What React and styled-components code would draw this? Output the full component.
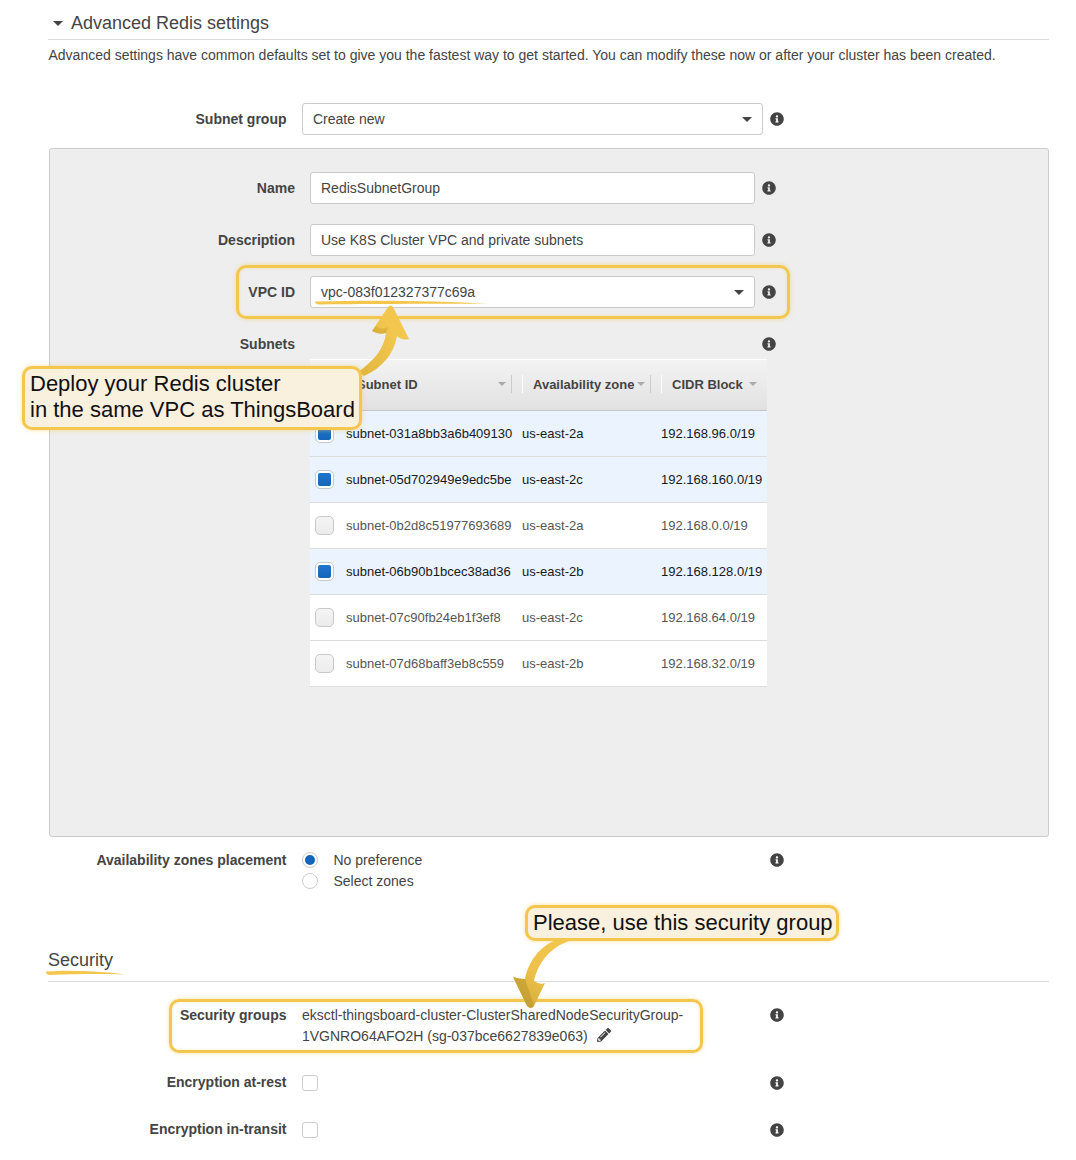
import React from 'react';
import styled, { createGlobalStyle } from 'styled-components';
import { FaInfoCircle, FaPencilAlt } from 'react-icons/fa';

const text = '#444';
const gold = '#f3c74e';

const GlobalStyle = createGlobalStyle`
  body {
    margin: 0;
    background: #fff;
    font-family: "Liberation Sans", Arial, sans-serif;
    font-size: 14px;
    color: ${text};
  }
`;

const Page = styled.div`
  position: relative;
  width: 1076px;
  height: 1160px;
  box-sizing: border-box;
  padding: 0 27px 0 48px;
  overflow: hidden;
`;

const Heading = styled.h2`
  display: flex;
  align-items: center;
  gap: 8px;
  height: ${(p) => p.$height}px;
  margin: ${(p) => p.$top}px 0 0;
  box-sizing: content-box;
  padding: ${(p) => p.$padTop || 0}px 0 ${(p) => p.$padBottom || 0}px;
  border-bottom: 1px solid #ddd;
  font-size: 18px;
  font-weight: normal;
  line-height: 24px;
  color: ${text};
`;

const Caret = styled.span`
  display: inline-block;
  width: 0;
  height: 0;
  flex: none;
  margin-left: ${(p) => p.$left || 0}px;
  border-left: ${(p) => p.$size}px solid transparent;
  border-right: ${(p) => p.$size}px solid transparent;
  border-top: ${(p) => p.$size}px solid ${(p) => p.$color || text};
`;

const Description = styled.p`
  margin: 5px 0 38px 0.5px;
  line-height: 20px;
`;

const Row = styled.div`
  position: relative;
  display: flex;
  align-items: ${(p) => (p.$top ? 'flex-start' : 'center')};
  margin-top: ${(p) => p.$mt || 0}px;
  min-height: ${(p) => p.$minHeight || 0}px;
`;

const Label = styled.label`
  flex: none;
  width: ${(p) => p.$width || 238.5}px;
  margin-right: ${(p) => p.$gap || 15.5}px;
  text-align: right;
  font-weight: bold;
  line-height: 21px;
  color: ${text};
`;

const Field = styled.div`
  display: flex;
  align-items: center;
  justify-content: space-between;
  flex: none;
  box-sizing: border-box;
  width: ${(p) => p.$width || 461}px;
  height: 32px;
  padding: 0 10px;
  background: #fff;
  border: 1px solid #ccc;
  border-radius: 3px;
  line-height: 30px;
`;

const Spacer = styled.div`
  flex: none;
  width: ${(p) => p.$width}px;
`;

const Info = styled(FaInfoCircle)`
  flex: none;
  width: 14px;
  height: 14px;
  margin-left: 7px;
  margin-top: ${(p) => p.$mt || 0}px;
  color: ${text};
`;

const Panel = styled.section`
  box-sizing: border-box;
  width: 1000px;
  height: 689px;
  margin: 13px 0 0 1px;
  padding-top: 23px;
  background: #eee;
  border: 1px solid #ccc;
  border-radius: 3px;
`;

const PanelRows = styled.div`
  display: flex;
  flex-direction: column;
  gap: 20px;
`;

const Frame = styled.div`
  position: absolute;
  left: ${(p) => p.$left}px;
  top: ${(p) => p.$top}px;
  width: ${(p) => p.$width}px;
  height: 54px;
  box-sizing: border-box;
  border: 3px solid ${gold};
  border-radius: 10px;
  box-shadow: 0 0 4px rgba(243, 199, 78, 0.55), inset 0 0 3px rgba(243, 199, 78, 0.35);
  pointer-events: none;
`;

const Table = styled.div`
  width: 457px;
  margin: -21px 0 0 260px;
`;

const HeaderRow = styled.div`
  display: grid;
  grid-template-columns: 26px 176px 139px 116px;
  align-items: center;
  box-sizing: border-box;
  height: 52px;
  padding-bottom: 2px;
  border-top: 1px solid #fff;
  border-bottom: 1px solid #c6c6c6;
  background: linear-gradient(#f3f3f3, #e1e1e1);
`;

const HeaderCell = styled.div`
  display: flex;
  align-items: center;
  justify-content: space-between;
  height: 18px;
  margin-left: 10px;
  padding: 0 ${(p) => (p.$last ? 10 : 5)}px 0 10px;
  border-left: 1px solid #fff;
  border-right: ${(p) => (p.$last ? 'none' : '1px solid #ccc')};
  font-size: 13px;
  font-weight: bold;
  color: ${text};
`;

const DataRow = styled.div`
  display: grid;
  grid-template-columns: 26px 176px 139px 116px;
  align-items: center;
  box-sizing: border-box;
  height: 46px;
  background: ${(p) => (p.$selected ? '#eaf3fe' : '#fff')};
  border-bottom: 1px solid #ddd;
  font-size: 13px;
  color: ${(p) => (p.$selected ? '#16191f' : '#555')};
`;

const Cell = styled.div`
  padding-left: 10px;
  white-space: nowrap;
`;

const RowCheck = styled.span`
  display: flex;
  align-items: center;
  justify-content: center;
  box-sizing: border-box;
  width: 19px;
  height: 19px;
  margin-left: 5px;
  background: ${(p) => (p.$selected ? '#fff' : 'linear-gradient(#f4f4f4, #ececec)')};
  border: 1px solid #c8c8c8;
  border-radius: 5px;

  &::after {
    content: '';
    display: ${(p) => (p.$selected ? 'block' : 'none')};
    width: 13px;
    height: 13px;
    border-radius: 2px;
    background: linear-gradient(#1f74cf, #1666b8);
  }
`;

const RadioList = styled.div`
  display: flex;
  flex-direction: column;
  flex: none;
  width: 461px;
  margin-top: -1px;
`;

const RadioRow = styled.div`
  display: flex;
  align-items: center;
  gap: 15.5px;
  height: 21px;
`;

const Radio = styled.span`
  display: flex;
  align-items: center;
  justify-content: center;
  box-sizing: border-box;
  width: 16px;
  height: 16px;
  background: #fff;
  border: 1px solid #ccc;
  border-radius: 50%;

  &::after {
    content: '';
    display: ${(p) => (p.$checked ? 'block' : 'none')};
    width: 10px;
    height: 10px;
    border-radius: 50%;
    background: #1166bb;
  }
`;

const CheckBox = styled.span`
  display: block;
  box-sizing: border-box;
  width: 16px;
  height: 16px;
  background: #fff;
  border: 1px solid #ccc;
  border-radius: 3px;
`;

const GroupText = styled.div`
  flex: none;
  width: 461px;
  line-height: 21px;
`;

const Pencil = styled(FaPencilAlt)`
  width: 14px;
  height: 14px;
  margin-left: 9px;
  vertical-align: -1px;
  color: ${text};
`;

const Callout = styled.div`
  position: absolute;
  left: ${(p) => p.$left}px;
  top: ${(p) => p.$top}px;
  box-sizing: border-box;
  width: ${(p) => p.$width}px;
  padding: ${(p) => p.$padding};
  background: #f9f0de;
  border: 3px solid ${gold};
  border-radius: 10px;
  box-shadow: 0 0 4px rgba(243, 199, 78, 0.6);
  font-size: 22px;
  line-height: 26px;
  color: #111;
  white-space: nowrap;
`;

const Drawing = styled.svg`
  position: absolute;
  left: 0;
  top: 0;
  width: 1076px;
  height: 1160px;
  pointer-events: none;
`;

const rows = [
  { id: 'subnet-031a8bb3a6b409130', az: 'us-east-2a', cidr: '192.168.96.0/19', selected: true },
  { id: 'subnet-05d702949e9edc5be', az: 'us-east-2c', cidr: '192.168.160.0/19', selected: true },
  { id: 'subnet-0b2d8c51977693689', az: 'us-east-2a', cidr: '192.168.0.0/19' },
  { id: 'subnet-06b90b1bcec38ad36', az: 'us-east-2b', cidr: '192.168.128.0/19', selected: true },
  { id: 'subnet-07c90fb24eb1f3ef8', az: 'us-east-2c', cidr: '192.168.64.0/19' },
  { id: 'subnet-07d68baff3eb8c559', az: 'us-east-2b', cidr: '192.168.32.0/19' },
];

function SubnetTable() {
  return (
    <Table>
      <HeaderRow>
        <div />
        <HeaderCell>
          <span>Subnet ID</span>
          <Caret $size={4} $color="#aaa" />
        </HeaderCell>
        <HeaderCell>
          <span>Availability zone</span>
          <Caret $size={4} $color="#aaa" />
        </HeaderCell>
        <HeaderCell $last>
          <span>CIDR Block</span>
          <Caret $size={4} $color="#aaa" />
        </HeaderCell>
      </HeaderRow>
      {rows.map((row) => (
        <DataRow key={row.id} $selected={row.selected}>
          <RowCheck $selected={row.selected} />
          <Cell>{row.id}</Cell>
          <Cell>{row.az}</Cell>
          <Cell>{row.cidr}</Cell>
        </DataRow>
      ))}
    </Table>
  );
}

function Annotations() {
  return (
    <Drawing viewBox="0 0 1076 1160">
      <defs>
        <linearGradient id="arrowUp" x1="0" y1="1" x2="0.7" y2="0.4">
          <stop offset="0" stopColor="#e0b53e" />
          <stop offset="1" stopColor="#f3c74e" />
        </linearGradient>
        <linearGradient id="arrowDown" x1="1" y1="0" x2="0.4" y2="1">
          <stop offset="0" stopColor="#f3c74e" />
          <stop offset="0.6" stopColor="#eec24a" />
          <stop offset="1" stopColor="#d9b03f" />
        </linearGradient>
      </defs>
      {/* underlines */}
      <path d="M315 301.5 C 370 300, 440 300.5, 489 304 C 440 303.5, 370 304, 320 304.5 Q 315 304.5 315 301.5 Z" fill={gold} />
      <path d="M46 971.5 C 70 970, 100 971, 125 974.5 C 100 973.5, 70 974, 50 975 Q 46 975 46 971.5 Z" fill={gold} />
      {/* arrows, each with a darker shade along one side of the head */}
      <path
        d="M358 372 C 372 362, 384 350, 386 333 Q 378 335 372 331 L 388 307 Q 391 304 393 307 L 409 339 Q 402 341 397 336 C 394 354, 382 368, 364 376 Z"
        fill="url(#arrowUp)"
      />
      <path d="M372 331 Q 378 335 386 333 L 388 327 Q 382 331 376 326 Z" fill="#b8921f" opacity="0.35" />
      <path
        d="M573 940 C 552 945, 538 962, 534 981 Q 540 985 545 983 L 534 1006 Q 531 1010 527 1006 L 513 977 Q 519 979 525 979 C 528 962, 540 946, 556 940 Z"
        fill="url(#arrowDown)"
      />
      <path d="M513 977 Q 519 979 525 979 L 534 1006 Q 531 1010 527 1006 Z" fill="#a98a22" opacity="0.4" />
    </Drawing>
  );
}

export default function App() {
  return (
    <Page>
      <GlobalStyle />
      <Heading $height={32} $top={0} $padTop={7}>
        <Caret $size={5} $left={5} />
        Advanced Redis settings
      </Heading>
      <Description>
        Advanced settings have common defaults set to give you the fastest way to get started. You can
        modify these now or after your cluster has been created.
      </Description>

      <Row>
        <Label>Subnet group</Label>
        <Field>
          Create new
          <Caret $size={5} />
        </Field>
        <Info />
      </Row>

      <Panel>
        <PanelRows>
          <Row>
            <Label $width={245} $gap={15}>Name</Label>
            <Field $width={445}>RedisSubnetGroup</Field>
            <Info />
          </Row>
          <Row>
            <Label $width={245} $gap={15}>Description</Label>
            <Field $width={445}>Use K8S Cluster VPC and private subnets</Field>
            <Info />
          </Row>
          <Row>
            <Label $width={245} $gap={15}>VPC ID</Label>
            <Field $width={445}>
              vpc-083f012327377c69a
              <Caret $size={5} />
            </Field>
            <Info />
            <Frame $left={186} $top={-11} $width={554} />
          </Row>
          <Row $minHeight={32}>
            <Label $width={245} $gap={15}>Subnets</Label>
            <Spacer $width={445} />
            <Info />
          </Row>
          <SubnetTable />
        </PanelRows>
      </Panel>

      <Row $top $mt={13}>
        <Label>Availability zones placement</Label>
        <RadioList>
          <RadioRow>
            <Radio $checked />
            No preference
          </RadioRow>
          <RadioRow>
            <Radio />
            Select zones
          </RadioRow>
        </RadioList>
        <Info $mt={3} />
      </Row>

      <Heading $height={29} $top={54} $padBottom={7}>Security</Heading>

      <Row $top $mt={23}>
        <Label>Security groups</Label>
        <GroupText>
          eksctl-thingsboard-cluster-ClusterSharedNodeSecurityGroup-
          <br />
          1VGNRO64AFO2H (sg-037bce6627839e063)
          <Pencil />
        </GroupText>
        <Info $mt={3} />
        <Frame $left={121} $top={-6} $width={534} />
      </Row>

      <Row $mt={25}>
        <Label>Encryption at-rest</Label>
        <GroupText><CheckBox /></GroupText>
        <Info />
      </Row>
      <Row $mt={26}>
        <Label>Encryption in-transit</Label>
        <GroupText><CheckBox /></GroupText>
        <Info />
      </Row>

      <Annotations />
      <Callout $left={22} $top={366} $width={340} $padding="2px 0 4px 5px">
        Deploy your Redis cluster
        <br />
        in the same VPC as ThingsBoard
      </Callout>
      <Callout $left={525} $top={905} $width={314} $padding="2px 0 2px 5px">
        Please, use this security group
      </Callout>
    </Page>
  );
}
